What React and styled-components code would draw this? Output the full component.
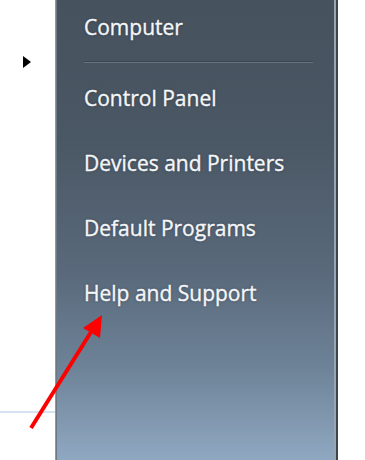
import React from 'react';
import styled, { createGlobalStyle } from 'styled-components';

const GlobalStyle = createGlobalStyle`
  html, body {
    margin: 0;
    padding: 0;
    background: #ffffff;
  }
  body {
    font-family: "Open Sans", "Noto Sans", "DejaVu Sans", sans-serif;
  }
`;

const Screen = styled.div`
  position: relative;
  display: flex;
  width: 365px;
  height: 460px;
  overflow: hidden;
  background: #ffffff;
`;

const Gutter = styled.div`
  display: flex;
  flex-direction: column;
  width: 55px;
  flex-shrink: 0;
`;

const Pointer = styled.div`
  width: 0;
  height: 0;
  margin: 56px 0 0 23px;
  border-left: 8px solid #000000;
  border-top: 6px solid transparent;
  border-bottom: 6px solid transparent;
`;

const Rule = styled.div`
  height: 2px;
  margin-top: 343px;
  background: #d6e3f0;
`;

const Panel = styled.div`
  display: flex;
  flex-direction: column;
  width: 283px;
  flex-shrink: 0;
  box-sizing: border-box;
  border-left: 1px solid #8e98a2;
  box-shadow: inset 1px 0 0 #6d7884, inset -2px 0 0 #97a6b4;
  border-right: 2px solid #3d444b;
  background: linear-gradient(
    180deg,
    #46525e 0%,
    #4a5764 30%,
    #5a6a7c 60%,
    #6e8398 80%,
    #8fa8c1 100%
  );
  padding-left: 28px;
`;

const Item = styled.div`
  display: flex;
  align-items: center;
  height: ${(p) => p.h || 65}px;
  color: #f4f6f8;
  font-size: 21px;
  line-height: 1;
  -webkit-text-stroke: 0.35px #f4f6f8;
  text-shadow: 0 0 3px rgba(20, 30, 40, 0.45);
  white-space: nowrap;
`;

const Separator = styled.div`
  width: 229px;
  height: 1px;
  margin: 7px 0 3px;
  background: #3b4650;
  border-bottom: 1px solid #67737f;
`;

const Annotation = styled.svg`
  position: absolute;
  left: 0;
  top: 0;
  pointer-events: none;
`;

const items = ['Control Panel', 'Devices and Printers', 'Default Programs', 'Help and Support'];

export default function App() {
  return (
    <>
      <GlobalStyle />
      <Screen>
        <Gutter>
          <Pointer />
          <Rule />
        </Gutter>
        <Panel>
          <Item h={54}>Computer</Item>
          <Separator />
          {items.map((label) => (
            <Item key={label}>{label}</Item>
          ))}
        </Panel>
        <Annotation width="365" height="460" viewBox="0 0 365 460">
          <line x1="31" y1="428" x2="91" y2="332" stroke="#ff0000" strokeWidth="4" />
          <polygon points="83,328 102,315 100,338" fill="#ff0000" />
        </Annotation>
      </Screen>
    </>
  );
}
